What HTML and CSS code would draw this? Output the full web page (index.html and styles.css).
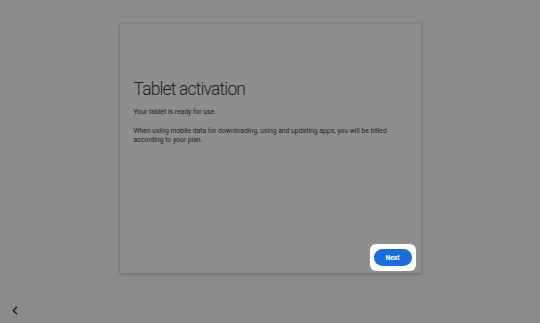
FILE: index.html
```html
<!DOCTYPE html>
<html lang="en">
<head>
  <meta charset="UTF-8">
  <meta name="viewport" content="width=device-width, initial-scale=1.0">
  <title>Tablet activation</title>
  <link rel="stylesheet" href="styles.css">
</head>
<body>
  <div class="screen">
    <div class="card">
      <h1>Tablet activation</h1>
      <p>Your tablet is ready for use.</p>
      <p>When using mobile data for downloading, using and updating apps, you will be billed according to your plan.</p>
      <div class="actions">
        <div class="focus">
          <button type="button">Next</button>
        </div>
      </div>
    </div>
    <div class="footer">
      <svg class="back" width="6" height="9" viewBox="0 0 6 9">
        <path d="M5 0.8 L1.4 4.5 L5 8.2" fill="none" stroke="#1c1c1c" stroke-width="1.5"/>
      </svg>
    </div>
  </div>
</body>
</html>
```

FILE: styles.css
```css
body {
  margin: 0;
  padding: 0;
  background: #8b8b8b;
  font-family: Roboto, "Noto Sans", sans-serif;
  color: #1e1e1e;
}
.screen {
  height: 323px;
  display: flex;
  flex-direction: column;
}
.card {
  width: 301px;
  height: 249px;
  margin: 24px auto 0;
  box-sizing: border-box;
  padding: 53px 5px 2px 14px;
  background: #8e8e8e;
  box-shadow: 0 1px 3px rgba(0, 0, 0, 0.25);
  display: flex;
  flex-direction: column;
}
h1 {
  margin: 0 0 7px;
  font-size: 17.5px;
  font-weight: 300;
  letter-spacing: -0.85px;
  line-height: 24px;
}
p {
  margin: 0 0 9px;
  font-size: 6.8px;
  line-height: 9.5px;
  padding-right: 20px;
}
.actions {
  margin-top: auto;
  display: flex;
  justify-content: flex-end;
}
.focus {
  background: #fff;
  border-radius: 6px;
  padding: 5px 4px;
}
button {
  display: block;
  width: 38px;
  height: 17px;
  padding: 0;
  border: none;
  border-radius: 9px;
  background: #1a6ed8;
  color: #fff;
  font-family: Roboto, sans-serif;
  font-size: 6.8px;
  font-weight: 700;
}
.footer {
  margin-top: auto;
  padding: 0 0 8px 12px;
}
.back {
  display: block;
}
```
